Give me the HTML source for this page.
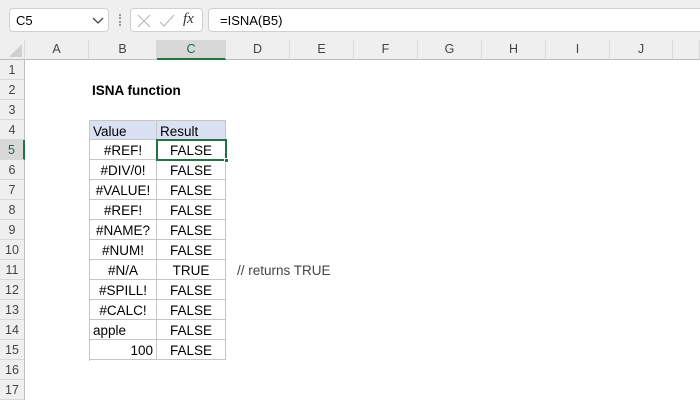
<!DOCTYPE html>
<html><head><style>
*{margin:0;padding:0;box-sizing:border-box}
body{width:700px;height:400px;overflow:hidden;background:#fff;font-family:"Liberation Sans",Arial,sans-serif;position:relative}
.top{position:absolute;left:0;top:0;width:700px;height:40px;background:#f0f0f0}
.box{position:absolute;background:#fff;border:1px solid #d0d0d0;border-radius:4px}
.ch{position:absolute;top:40px;height:20px;background:#efefef;border-bottom:1px solid #bdbdbd;border-right:1px solid #d8d8d8;font-size:12.5px;color:#444;text-align:center;line-height:19px}
.rh{position:absolute;left:0;width:25px;height:20px;background:#efefef;border-right:1px solid #bdbdbd;border-bottom:1px solid #d8d8d8;font-size:12.5px;color:#444;text-align:center;line-height:21px}
.c{position:absolute;height:20px;font-size:13.5px;line-height:22px;color:#000;white-space:nowrap}
.t{border-right:1px solid #c6c6c6;border-bottom:1px solid #c6c6c6;text-align:center}
</style></head><body>
<div class="top"></div>
<div class="box" style="left:9px;top:8px;width:100px;height:24px"><span style="position:absolute;left:6px;top:4px;font-size:13px">C5</span>
<svg style="position:absolute;left:82px;top:8px" width="12" height="8"><path d="M1 1 L6 6 L11 1" stroke="#444" fill="none" stroke-width="1.3"/></svg></div>
<div style="position:absolute;left:119px;top:14px;width:2px;height:12px;border-left:2px dotted #999"></div>
<div class="box" style="left:130px;top:8px;width:73px;height:24px">
<svg style="position:absolute;left:6px;top:5px" width="14" height="14"><path d="M1 1L13 13M13 1L1 13" stroke="#bbb" stroke-width="1.2"/></svg>
<svg style="position:absolute;left:28px;top:5px" width="16" height="14"><path d="M1 8L5 12L15 1" stroke="#bbb" fill="none" stroke-width="1.2"/></svg>
<span style="position:absolute;left:52px;top:2px;font-family:'Liberation Serif',serif;font-style:italic;font-size:15px;color:#333">fx</span></div>
<div class="box" style="left:208px;top:8px;width:500px;height:24px"><span style="position:absolute;left:11px;top:4px;font-size:13px">=ISNA(B5)</span></div>
<div class="ch" style="left:0;width:25px"><svg width="22" height="18" style="position:absolute;left:2px;top:0"><path d="M20 4L20 17L7 17Z" fill="#d0d0d0"/></svg></div>
<div class="ch" style="left:25px;width:64px">A</div>
<div class="ch" style="left:89px;width:68px">B</div>
<div class="ch" style="left:157px;width:69px;background:#d8d8d8;color:#1e6b41;border-bottom:2px solid #217346">C</div>
<div class="ch" style="left:226px;width:64px">D</div>
<div class="ch" style="left:290px;width:64px">E</div>
<div class="ch" style="left:354px;width:64px">F</div>
<div class="ch" style="left:418px;width:64px">G</div>
<div class="ch" style="left:482px;width:64px">H</div>
<div class="ch" style="left:546px;width:64px">I</div>
<div class="ch" style="left:610px;width:63px">J</div>
<div class="ch" style="left:673px;width:27px"></div>
<div class="rh" style="top:60px">1</div><div class="rh" style="top:80px">2</div><div class="rh" style="top:100px">3</div><div class="rh" style="top:120px">4</div>
<div class="rh" style="top:140px;background:#d8d8d8;color:#1e6b41;border-right:2px solid #217346">5</div>
<div class="rh" style="top:160px">6</div><div class="rh" style="top:180px">7</div><div class="rh" style="top:200px">8</div><div class="rh" style="top:220px">9</div><div class="rh" style="top:240px">10</div><div class="rh" style="top:260px">11</div><div class="rh" style="top:280px">12</div><div class="rh" style="top:300px">13</div><div class="rh" style="top:320px">14</div><div class="rh" style="top:340px">15</div><div class="rh" style="top:360px">16</div><div class="rh" style="top:380px">17</div>
<div class="c" style="left:92px;top:80px;font-weight:bold">ISNA function</div>
<div style="position:absolute;left:89px;top:120px;width:137px;height:241px;border-left:1px solid #c6c6c6;border-top:1px solid #c6c6c6"></div>
<div class="c t" style="left:89px;top:120px;width:68px;background:#d9e1f2;text-align:left;padding-left:3px;border-left:1px solid #c6c6c6;border-top:1px solid #c6c6c6">Value</div>
<div class="c t" style="left:157px;top:120px;width:69px;background:#d9e1f2;text-align:left;padding-left:3px;border-top:1px solid #c6c6c6">Result</div>
<div class="c t" style="left:89px;top:140px;width:68px;border-left:1px solid #c6c6c6">#REF!</div><div class="c t" style="left:157px;top:140px;width:69px">FALSE</div>
<div class="c t" style="left:89px;top:160px;width:68px;border-left:1px solid #c6c6c6">#DIV/0!</div><div class="c t" style="left:157px;top:160px;width:69px">FALSE</div>
<div class="c t" style="left:89px;top:180px;width:68px;border-left:1px solid #c6c6c6">#VALUE!</div><div class="c t" style="left:157px;top:180px;width:69px">FALSE</div>
<div class="c t" style="left:89px;top:200px;width:68px;border-left:1px solid #c6c6c6">#REF!</div><div class="c t" style="left:157px;top:200px;width:69px">FALSE</div>
<div class="c t" style="left:89px;top:220px;width:68px;border-left:1px solid #c6c6c6">#NAME?</div><div class="c t" style="left:157px;top:220px;width:69px">FALSE</div>
<div class="c t" style="left:89px;top:240px;width:68px;border-left:1px solid #c6c6c6">#NUM!</div><div class="c t" style="left:157px;top:240px;width:69px">FALSE</div>
<div class="c t" style="left:89px;top:260px;width:68px;border-left:1px solid #c6c6c6">#N/A</div><div class="c t" style="left:157px;top:260px;width:69px">TRUE</div>
<div class="c t" style="left:89px;top:280px;width:68px;border-left:1px solid #c6c6c6">#SPILL!</div><div class="c t" style="left:157px;top:280px;width:69px">FALSE</div>
<div class="c t" style="left:89px;top:300px;width:68px;border-left:1px solid #c6c6c6">#CALC!</div><div class="c t" style="left:157px;top:300px;width:69px">FALSE</div>
<div class="c t" style="left:89px;top:320px;width:68px;border-left:1px solid #c6c6c6;text-align:left;padding-left:3px">apple</div><div class="c t" style="left:157px;top:320px;width:69px">FALSE</div>
<div class="c t" style="left:89px;top:340px;width:68px;border-left:1px solid #c6c6c6;text-align:right;padding-right:3px">100</div><div class="c t" style="left:157px;top:340px;width:69px">FALSE</div>
<div style="position:absolute;left:156px;top:139px;width:71px;height:22px;border:2px solid #217346"></div>
<div style="position:absolute;left:224px;top:158px;width:5px;height:5px;background:#217346;border:1px solid #fff"></div>
<div class="c" style="left:237px;top:260px;color:#444">// returns TRUE</div>
</body></html>
